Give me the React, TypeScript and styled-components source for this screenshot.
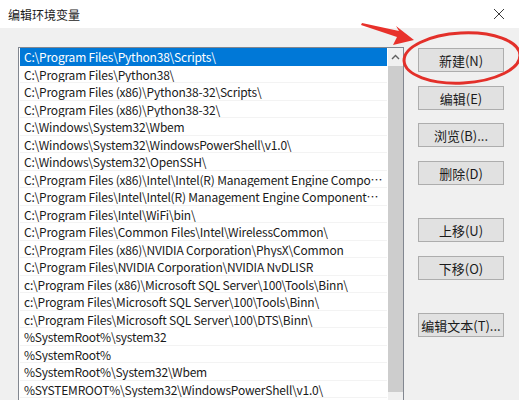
import styled, { createGlobalStyle } from "styled-components";

const GlobalStyle = createGlobalStyle`
    html, body {
        margin: 0;
        padding: 0;
        background: #ffffff;
    }
    * {
        box-sizing: border-box;
    }
`;

const paths: string[] = [
    "C:\\Program Files\\Python38\\Scripts\\",
    "C:\\Program Files\\Python38\\",
    "C:\\Program Files (x86)\\Python38-32\\Scripts\\",
    "C:\\Program Files (x86)\\Python38-32\\",
    "C:\\Windows\\System32\\Wbem",
    "C:\\Windows\\System32\\WindowsPowerShell\\v1.0\\",
    "C:\\Windows\\System32\\OpenSSH\\",
    "C:\\Program Files (x86)\\Intel\\Intel(R) Management Engine Components\\DAL",
    "C:\\Program Files\\Intel\\Intel(R) Management Engine Components\\DAL",
    "C:\\Program Files\\Intel\\WiFi\\bin\\",
    "C:\\Program Files\\Common Files\\Intel\\WirelessCommon\\",
    "C:\\Program Files (x86)\\NVIDIA Corporation\\PhysX\\Common",
    "C:\\Program Files\\NVIDIA Corporation\\NVIDIA NvDLISR",
    "c:\\Program Files (x86)\\Microsoft SQL Server\\100\\Tools\\Binn\\",
    "c:\\Program Files\\Microsoft SQL Server\\100\\Tools\\Binn\\",
    "c:\\Program Files\\Microsoft SQL Server\\100\\DTS\\Binn\\",
    "%SystemRoot%\\system32",
    "%SystemRoot%",
    "%SystemRoot%\\System32\\Wbem",
    "%SYSTEMROOT%\\System32\\WindowsPowerShell\\v1.0\\",
];

const buttons = [
    { label: "新建(N)", space: 1 },
    { label: "编辑(E)", space: 14 },
    { label: "浏览(B)...", space: 13 },
    { label: "删除(D)", space: 14 },
    { label: "上移(U)", space: 33 },
    { label: "下移(O)", space: 14 },
    { label: "编辑文本(T)...", space: 33 },
];

function App() {
    return (
        <Window>
            <GlobalStyle />
            <TitleBar>
                <Title>编辑环境变量</Title>
                <CloseButton>
                    <svg width="12" height="12" viewBox="0 0 12 12">
                        <path d="M1 1 L11 11 M11 1 L1 11" stroke="#3a3a3a" strokeWidth="1" fill="none" />
                    </svg>
                </CloseButton>
            </TitleBar>
            <Body>
                <ListBox>
                    <Rows>
                        {paths.map((p, i) => (
                            <Row key={i} selected={i === 0}>{p}</Row>
                        ))}
                    </Rows>
                    <ScrollBar>
                        <ArrowButton>
                            <svg width="9" height="6" viewBox="0 0 9 6">
                                <path d="M1 5 L4.5 1.5 L8 5" stroke="#606060" strokeWidth="1.4" fill="none" />
                            </svg>
                        </ArrowButton>
                        <Thumb />
                    </ScrollBar>
                </ListBox>
                <ButtonColumn>
                    {buttons.map((b) => (
                        <DialogButton key={b.label} space={b.space}>{b.label}</DialogButton>
                    ))}
                </ButtonColumn>
            </Body>
            <Annotation width="519" height="400" viewBox="0 0 519 400">
                <path
                    d="M362 23 L399 31 L396 26 L414 40 L393 45 L397 37 L361 25 Z"
                    fill="#e8312b"
                />
                <ellipse cx="462" cy="58" rx="58" ry="25" fill="none" stroke="#e3302a" strokeWidth="3" transform="rotate(-3 462 58)" />
            </Annotation>
        </Window>
    );
}

const Window = styled.div`
    position: relative;
    width: 519px;
    height: 400px;
    overflow: hidden;
    background: #f0f0f0;
    font-family: "Noto Sans CJK SC", "Noto Sans", sans-serif;
`;

const TitleBar = styled.div`
    display: flex;
    align-items: center;
    justify-content: space-between;
    height: 28px;
    padding: 0 12px 0 8px;
    background: #ffffff;
`;

const Title = styled.div`
    font-size: 12px;
    color: #1a1a1a;
`;

const CloseButton = styled.div`
    display: flex;
    align-items: center;
    justify-content: center;
    width: 16px;
    height: 16px;
`;

const Body = styled.div`
    display: flex;
    align-items: flex-start;
    padding: 19px 0 0 18px;
`;

const ListBox = styled.div`
    display: flex;
    width: 386px;
    height: 360px;
    border: 1px solid #828790;
    border-bottom: none;
    background: #ffffff;
`;

const Rows = styled.div`
    flex: 1;
    min-width: 0;
    padding: 0 1px;
`;

const Row = styled.div<{ selected: boolean }>`
    height: 17.5px;
    line-height: 17.5px;
    padding-left: 4px;
    padding-right: 4px;
    font-size: 12px;
    letter-spacing: -0.2px;
    white-space: nowrap;
    overflow: hidden;
    text-overflow: ellipsis;
    color: ${({ selected }) => (selected ? "#ffffff" : "#1a1a1a")};
    background: ${({ selected }) => (selected ? "#0078d7" : "#ffffff")};
    border-bottom: 1px solid ${({ selected }) => (selected ? "#0078d7" : "#f3f3f3")};
`;

const ScrollBar = styled.div`
    display: flex;
    flex-direction: column;
    width: 15px;
    background: #f0f0f0;
`;

const ArrowButton = styled.div`
    display: flex;
    align-items: center;
    justify-content: center;
    height: 18px;
`;

const Thumb = styled.div`
    height: 326px;
    background: #cdcdcd;
`;

const ButtonColumn = styled.div`
    display: flex;
    flex-direction: column;
    margin-left: 14px;
`;

const DialogButton = styled.button<{ space: number }>`
    width: 86px;
    height: 24px;
    margin-top: ${({ space }) => space}px;
    padding: 0;
    border: 1px solid #adadad;
    background: #e1e1e1;
    color: #1a1a1a;
    font-family: "Noto Sans CJK SC", "Noto Sans", sans-serif;
    font-size: 13px;
`;

const Annotation = styled.svg`
    position: absolute;
    left: 0;
    top: 0;
    pointer-events: none;
`;

export default App;
